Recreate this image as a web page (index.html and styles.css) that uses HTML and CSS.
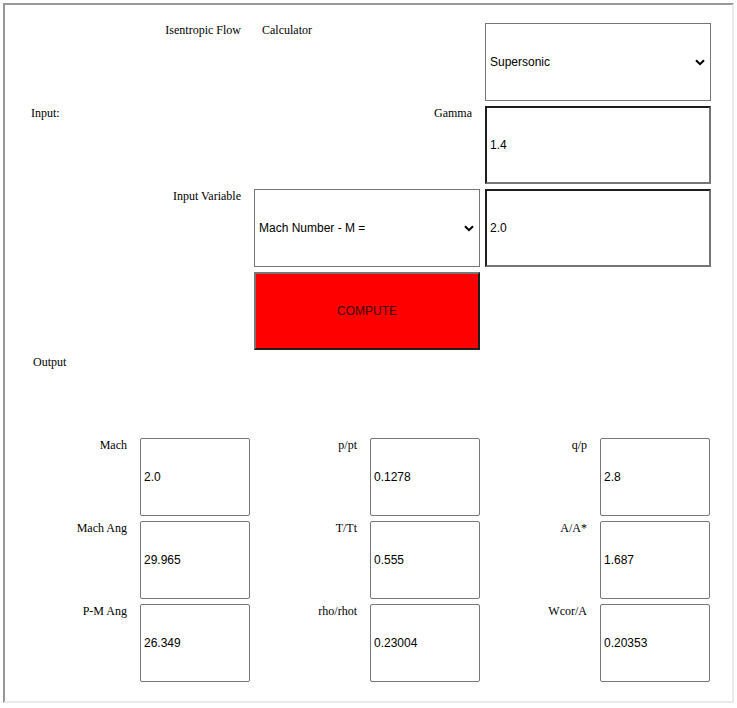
FILE: index.html
```html
<!DOCTYPE html>
<html>
<head>
<meta charset="utf-8">
<title>Isentropic Flow Calculator</title>
<link rel="stylesheet" href="styles.css">
</head>
<body>
<div class="frame">
  <div class="top-grid">
    <div></div>
    <div class="lbl lbl-r">Isentropic Flow</div>
    <div class="lbl">Calculator</div>
    <div class="sel-wrap">
      <select class="field sel"><option>Supersonic</option><option>Subsonic</option></select>
      <svg class="chev" viewBox="0 0 10 7" width="10" height="7"><path d="M1 1.2 L5 5.2 L9 1.2" fill="none" stroke="#000" stroke-width="2"/></svg>
    </div>

    <div class="lbl">Input:</div>
    <div></div>
    <div class="lbl lbl-r">Gamma</div>
    <input class="field in-inset" type="text" value="1.4">

    <div></div>
    <div class="lbl lbl-r">Input Variable</div>
    <div class="sel-wrap">
      <select class="field sel"><option>Mach Number - M =</option></select>
      <svg class="chev" viewBox="0 0 10 7" width="10" height="7"><path d="M1 1.2 L5 5.2 L9 1.2" fill="none" stroke="#000" stroke-width="2"/></svg>
    </div>
    <input class="field in-inset" type="text" value="2.0">

    <div></div>
    <div></div>
    <button class="compute" type="button">COMPUTE</button>
    <div></div>

    <div class="lbl lbl-out">Output</div>
  </div>

  <div class="out-grid">
    <div class="lbl lbl-r">Mach</div>
    <input class="field out-box" type="text" value="2.0">
    <div class="lbl lbl-r">p/pt</div>
    <input class="field out-box" type="text" value="0.1278">
    <div class="lbl lbl-r">q/p</div>
    <input class="field out-box" type="text" value="2.8">

    <div class="lbl lbl-r">Mach Ang</div>
    <input class="field out-box" type="text" value="29.965">
    <div class="lbl lbl-r">T/Tt</div>
    <input class="field out-box" type="text" value="0.555">
    <div class="lbl lbl-r">A/A*</div>
    <input class="field out-box" type="text" value="1.687">

    <div class="lbl lbl-r">P-M Ang</div>
    <input class="field out-box" type="text" value="26.349">
    <div class="lbl lbl-r">rho/rhot</div>
    <input class="field out-box" type="text" value="0.23004">
    <div class="lbl lbl-r">Wcor/A</div>
    <input class="field out-box" type="text" value="0.20353">
  </div>
</div>
</body>
</html>
```

FILE: styles.css
```css
* {
  box-sizing: border-box;
}

body {
  margin: 3px;
  font-family: "Liberation Serif", "Times New Roman", serif;
  font-size: 12px;
  color: #000;
  background: #fff;
}

.frame {
  width: 731px;
  height: 700px;
  border: 2px solid;
  border-color: #999 #ebebeb #ebebeb #999;
  padding: 18px 0 0 18px;
}

.top-grid {
  display: grid;
  grid-template-columns: 110px 111px 226px 226px;
  grid-template-rows: repeat(5, 78px);
  gap: 5px;
}

.out-grid {
  display: grid;
  grid-template-columns: 112px 110px 110px 110px 110px 110px;
  grid-template-rows: repeat(3, 78px);
  gap: 5px;
  margin-top: 5px;
}

.lbl {
  padding: 0 8px;
  line-height: 14px;
}

.lbl-r {
  text-align: right;
}

.lbl-out {
  padding-left: 10px;
}

.field {
  display: block;
  width: 100%;
  height: 78px;
  margin: 0;
  font-family: "Liberation Sans", Arial, sans-serif;
  font-size: 12px;
  color: #000;
  background: #fff;
  outline: none;
}

.in-inset {
  border: 2px solid;
  border-color: #1e1e1e #767676 #767676 #1e1e1e;
  padding: 1px 3px;
}

.out-box {
  border: 1px solid #767676;
  border-radius: 2px;
  padding: 1px 3px;
}

.sel-wrap {
  position: relative;
}

.sel {
  appearance: none;
  -webkit-appearance: none;
  border: 1px solid #767676;
  border-radius: 0;
  padding: 0 20px 0 4px;
}

.chev {
  position: absolute;
  right: 6px;
  top: 50%;
  margin-top: -3px;
  pointer-events: none;
}

.compute {
  display: block;
  width: 100%;
  height: 78px;
  margin: 0;
  background: #ff0000;
  border: 2px solid;
  border-color: #767676 #1e1e1e #1e1e1e #767676;
  font-family: "Liberation Sans", Arial, sans-serif;
  font-size: 12px;
  color: #3a0000;
  padding: 0;
}
```
